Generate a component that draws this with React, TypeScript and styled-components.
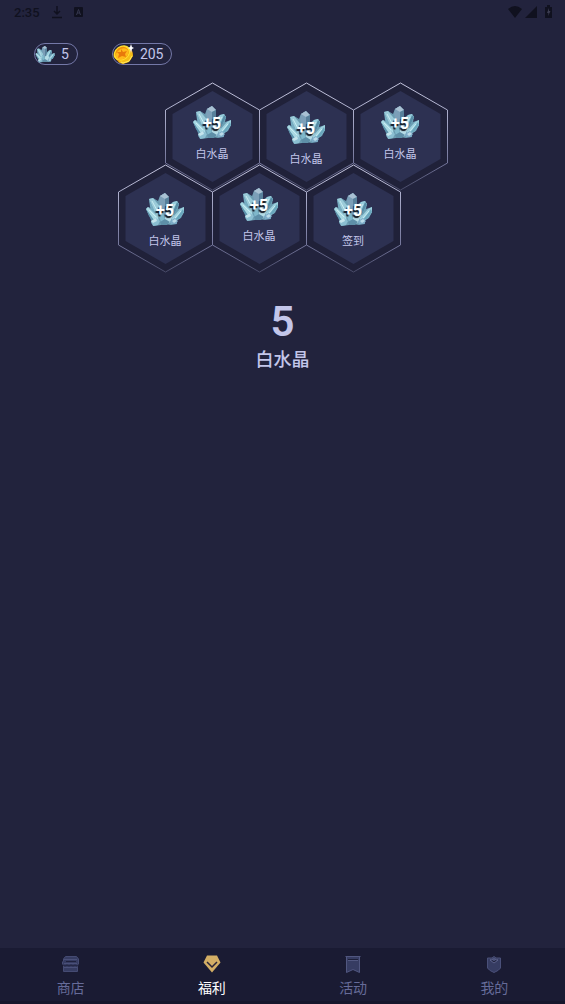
import React from 'react';
import styled, { createGlobalStyle, css } from 'styled-components';

const GlobalStyle = createGlobalStyle`
  * { box-sizing: border-box; }
  body {
    margin: 0;
    background: #22233d;
    font-family: Roboto, "Noto Sans CJK SC", sans-serif;
  }
  button { font: inherit; color: inherit; border: 0; padding: 0; background: none; cursor: pointer; }
`;

const Screen = styled.div`
  min-height: 100vh;
  display: flex;
  flex-direction: column;
  background: #22233d;
  color: #c3c6ea;
`;

const StatusBar = styled.header`
  display: flex;
  justify-content: space-between;
  align-items: center;
  height: 24px;
  padding: 0 12px 0 14px;
  color: #10111f;
  font-size: 13px;
  font-weight: 500;
`;

const StatusGroup = styled.div<{ $gap: number }>`
  display: flex;
  align-items: center;
  gap: ${(p) => p.$gap}px;
  svg { display: block; }
`;

const Wallet = styled.div`
  display: flex;
  gap: 34px;
  padding: 19px 34px 0;
`;

const Pill = styled.div`
  display: flex;
  align-items: center;
  gap: 6px;
  height: 22px;
  padding-right: 8px;
  border: 1px solid #7478a8;
  border-radius: 11px;
  font-size: 14px;
  line-height: 22px;
  svg { display: block; }
`;

const Board = styled.main`
  flex: 1;
  display: flex;
  flex-direction: column;
  align-items: center;
  padding-top: 17px;
`;

const Honeycomb = styled.div`
  display: flex;
  flex-direction: column;
  width: 329px;
`;

const HexRow = styled.div<{ $side: 'start' | 'end' }>`
  display: flex;
  justify-content: flex-${(p) => p.$side};
  & + & { margin-top: -26px; }
`;

const HexButton = styled.button<{ $drop: number }>`
  position: relative;
  display: flex;
  flex-direction: column;
  align-items: center;
  width: 94px;
  height: 108px;
  padding-top: ${(p) => p.$drop}px;
`;

const HexFrame = styled.svg`
  position: absolute;
  inset: 0;
  overflow: visible;
`;

const Prize = styled.span`
  position: relative;
  display: grid;
  place-items: center;
  width: 40px;
  height: 34px;
  svg { display: block; }
`;

const Bonus = styled.strong`
  position: absolute;
  inset: 0;
  text-align: center;
  color: #fff;
  font-size: 16px;
  line-height: 36px;
  font-weight: 700;
  text-shadow: -1px 2px 1px #10131c;
`;

const HexLabel = styled.span`
  position: relative;
  margin-top: 7px;
  font-size: 11px;
  line-height: 16px;
`;

const Result = styled.section`
  display: flex;
  flex-direction: column;
  align-items: center;
  margin-top: 26px;
`;

const ResultCount = styled.strong`
  font-size: 42px;
  line-height: 48px;
  font-weight: 600;
`;

const ResultName = styled.span`
  font-size: 18px;
  line-height: 28px;
  font-weight: 500;
`;

const TabBar = styled.nav`
  display: grid;
  grid-template-columns: repeat(4, 1fr);
  height: 56px;
  padding-top: 7px;
  background: #1a1b33;
  border-bottom: 3px solid #16172c;
`;

const Tab = styled.button<{ $active?: boolean }>`
  display: flex;
  flex-direction: column;
  align-items: center;
  gap: 5px;
  && { color: #666b99; }
  font-size: 14px;
  line-height: 20px;
  svg { display: block; }
  ${(p) => p.$active && css`&& { color: #fff; }`}
`;

function Crystal({ width, height }: { width: number; height: number }) {
  return (
    <svg width={width} height={height} viewBox="0 0 40 34" preserveAspectRatio="none" aria-hidden="true">
      <path d="M13 8 15 3 20 0 24 4 24 12 28 9 32 8 34 11 33 16 39 14 39 19 36 25 32 27 32 31 26 32 20 31 16 32 9 33 6 30 7 26 4 23 1 16 3 14 6 15 4 6 8 5Z" fill="#6b9db2" />
      <path d="M4 6 8 5 16 15 18 25 12 24Z" fill="#9bcbd9" />
      <path d="M4 6 12 24 9 23 5 14Z" fill="#76adc2" />
      <path d="M14 8 15 3 20 0 20 22 17 20Z" fill="#7c9fb8" />
      <path d="M15 3 20 0 24 4 20 6Z" fill="#a9c1d3" />
      <path d="M20 6 24 4 24 18 20 22Z" fill="#58809b" />
      <path d="M23 16 28 9 32 8 34 11 28 24 23 27Z" fill="#98cedd" />
      <path d="M32 9 34 11 29 22 27 21Z" fill="#568ca5" />
      <path d="M1 16 3 14 13 24 14 29 8 26Z" fill="#a9d9e3" />
      <path d="M1 16 8 26 12 28 6 27Z" fill="#5c93ac" />
      <path d="M27 25 35 16 39 14 39 19 34 26 27 29Z" fill="#9dd0de" />
      <path d="M38 16 39 19 34 26 30 27Z" fill="#6aa7bd" />
      <path d="M12 17 18 19 21 30 16 29Z" fill="#7fb8cb" />
      <path d="M20 21 25 18 28 22 25 30 20 31Z" fill="#b4dce6" />
      <path d="M6 28 11 25 15 28 13 32 8 33Z" fill="#8bbfd2" />
      <path d="M6 28 11 25 12 28 8 30Z" fill="#c4e4ec" />
      <path d="M15 29 20 26 25 29 22 32 17 32Z" fill="#5e8fa8" />
      <path d="M25 28 30 25 33 28 31 31 26 31Z" fill="#7dacc8" />
      <path d="M27 28 30 26 32 28 29 30Z" fill="#bcdce9" />
      <path d="M7 8 14 21M30 11 25 20M4 17 11 24M36 18 30 25" stroke="#c9edf2" strokeWidth="1" fill="none" />
    </svg>
  );
}

function Coin() {
  return (
    <svg width="21" height="20" viewBox="0 0 21 20" aria-hidden="true">
      <ellipse cx="11" cy="11" rx="9" ry="8" transform="rotate(-32 11 11)" fill="#d98206" />
      <path d="M5 18 10 20 16 18 20 12 19 7Z" fill="#f5bd18" />
      <path d="M8 18 10 19 16 17 19 12" stroke="#ffe85a" strokeWidth="1" fill="none" />
      <ellipse cx="9" cy="9" rx="9" ry="7" transform="rotate(-36 9 9)" fill="#ffdc2d" />
      <ellipse cx="9" cy="9" rx="7" ry="6" transform="rotate(-36 9 9)" fill="#f08f08" />
      <ellipse cx="9" cy="10" rx="7" ry="5" transform="rotate(-36 9 10)" fill="#ffb91b" />
      <path d="m8 5 2 3 4-1-2 3 1 3-4-1-4 2 1-4-2-2 4 0Z" fill="#e8790b" />
      <path d="m18 0 1 3 2 1-2 1-1 4-1-4-2-1 2-1Z" fill="#fff" />
    </svg>
  );
}

function Hexagon() {
  return (
    <HexFrame width="94" height="108" viewBox="0 0 94 108" aria-hidden="true">
      <defs>
        <linearGradient id="hex-edge" x1="0" y1="0" x2="0" y2="1">
          <stop offset="0" stopColor="#c5c6df" />
          <stop offset="0.3" stopColor="#a9abc9" />
          <stop offset="0.75" stopColor="#73759a" />
          <stop offset="1" stopColor="#484a68" />
        </linearGradient>
      </defs>
      <path d="M47.500 1 94.500 28V81L47.500 108 .5 81V28Z" fill="#202139" stroke="url(#hex-edge)" />
      <path d="M47.500 9 87.500 32V77L47.500 100 7.500 77V32Z" fill="#2d3152" />
    </HexFrame>
  );
}

function ShopIcon() {
  return (
    <svg width="18" height="18" viewBox="0 0 18 18" aria-hidden="true">
      <path d="M3.500 1.500H14.500L16.500 4V9L15.500 10V16.500H1.500V10L.5 9V7L1.500 6V4Z" fill="#363c62" stroke="#454b73" />
      <path d="M4 6.500H14" stroke="#1f213d" />
      <path d="M2 4.500H15M2 8.500H15" stroke="#4a5079" />
      <path d="M1 10Q3 12 5 10Q7 12 9 10Q11 12 13 10Q15 12 17 10" fill="none" stroke="#20223e" />
      <path d="M2 12.500H15" stroke="#4a5079" />
    </svg>
  );
}

function GemIcon() {
  return (
    <svg width="18" height="18" viewBox="0 0 18 18" aria-hidden="true">
      <path d="M4 .5H14L17.500 7.500 9 17.500 .5 7.500Z" fill="#d3ae65" />
      <path d="m4 7 5 5 5-5" fill="none" stroke="#292437" strokeWidth="1.500" />
    </svg>
  );
}

function BannerIcon() {
  return (
    <svg width="18" height="18" viewBox="0 0 18 18" aria-hidden="true">
      <path d="M1.500 1.500H16.500M2.500 1.500V17.500L9 14.500 15.500 17.500V1.500Z" fill="#363c62" stroke="#515780" />
      <path d="M4 4.500H14" stroke="#1d1f39" />
      <path d="M4 5.500H14" stroke="#515780" />
    </svg>
  );
}

function ShieldIcon() {
  return (
    <svg width="18" height="18" viewBox="0 0 18 18" aria-hidden="true">
      <path d="M9 1.500 11 3H15.500V13Q14 15.500 9 17.500 4 15.500 2.500 13V3H7Z" fill="#363c62" stroke="#4a5079" />
      <path d="M5 5Q9 2.500 13 5L9 8Z" fill="#454b73" stroke="#5d638c" />
      <path d="m6.500 5 2.500 2 2.500-2" fill="none" stroke="#1d1f39" />
    </svg>
  );
}

type Cell = { label: string; drop: number };

const rows: { side: 'start' | 'end'; cells: Cell[] }[] = [
  { side: 'end', cells: [{ label: '白水晶', drop: 24 }, { label: '白水晶', drop: 29 }, { label: '白水晶', drop: 24 }] },
  { side: 'start', cells: [{ label: '白水晶', drop: 29 }, { label: '白水晶', drop: 24 }, { label: '签到', drop: 29 }] },
];

const tabs = [
  { label: '商店', Icon: ShopIcon },
  { label: '福利', Icon: GemIcon, active: true },
  { label: '活动', Icon: BannerIcon },
  { label: '我的', Icon: ShieldIcon },
];

export default function App() {
  return (
    <>
      <GlobalStyle />
      <Screen>
        <StatusBar>
          <StatusGroup $gap={12}>
            <span>2:35</span>
            <svg width="10" height="14" viewBox="0 0 10 14" aria-hidden="true">
              <path d="M5 1V9M2 6 5 9 8 6M0 12.500H10" stroke="currentColor" strokeWidth="1.500" fill="none" />
            </svg>
            <svg width="9" height="10" viewBox="0 0 9 10" aria-hidden="true">
              <rect width="9" height="10" rx="1" fill="currentColor" />
              <path d="M2.500 8 4.500 2.500 6.500 8M3 6H6" stroke="#34364e" fill="none" />
            </svg>
          </StatusGroup>
          <StatusGroup $gap={3}>
            <svg width="14" height="12" viewBox="0 0 14 12" aria-hidden="true">
              <path d="M0 3Q7-3 14 3L7 12Z" fill="currentColor" />
            </svg>
            <svg width="12" height="12" viewBox="0 0 12 12" aria-hidden="true">
              <path d="M12 0V12H0Z" fill="currentColor" />
            </svg>
            <svg width="13" height="14" viewBox="0 0 13 14" aria-hidden="true">
              <path d="M5 2H7V0H10V2H12V13H5Z" fill="currentColor" />
              <path d="M9 3 7 8H8.500L8 11 10.500 6H9Z" fill="#3c3d52" />
            </svg>
          </StatusGroup>
        </StatusBar>
        <Wallet>
          <Pill><Crystal width={20} height={17} /><span>5</span></Pill>
          <Pill><Coin /><span>205</span></Pill>
        </Wallet>
        <Board>
          <Honeycomb>
            {rows.map((row) => (
              <HexRow key={row.side} $side={row.side}>
                {row.cells.map((cell, i) => (
                  <HexButton key={i} type="button" $drop={cell.drop}>
                    <Hexagon />
                    <Prize><Crystal width={40} height={34} /><Bonus>+5</Bonus></Prize>
                    <HexLabel>{cell.label}</HexLabel>
                  </HexButton>
                ))}
              </HexRow>
            ))}
          </Honeycomb>
          <Result>
            <ResultCount>5</ResultCount>
            <ResultName>白水晶</ResultName>
          </Result>
        </Board>
        <TabBar>
          {tabs.map(({ label, Icon, active }) => (
            <Tab key={label} type="button" $active={active} aria-current={active ? 'page' : undefined}>
              <Icon />
              <span>{label}</span>
            </Tab>
          ))}
        </TabBar>
      </Screen>
    </>
  );
}
